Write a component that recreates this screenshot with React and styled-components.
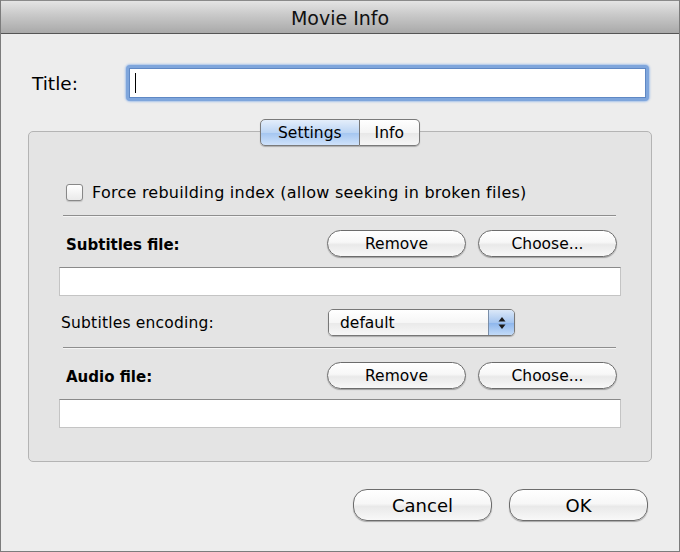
import React from 'react'
import styled, { createGlobalStyle } from 'styled-components'

const Global = createGlobalStyle`
  html, body { margin: 0; padding: 0; background: #ededed; }
  body { font-family: "DejaVu Sans", "Liberation Sans", sans-serif; color: #000; }
  * { box-sizing: border-box; }
`

const Window = styled.div`
  width: 680px;
  height: 552px;
  display: flex;
  flex-direction: column;
  background: #ededed;
  border: 1px solid #7c7c7c;
  border-top: none;
`

const TitleBar = styled.div`
  height: 34px;
  display: flex;
  align-items: center;
  justify-content: center;
  background: linear-gradient(#e4e4e4, #c8c8c8 45%, #a9a9a9);
  border-top: 1px solid #8a8a8a;
  border-bottom: 1px solid #555;
  font-size: 19px;
  color: #111;
  padding-top: 2px;
`

const Body = styled.div`
  flex: 1;
  display: flex;
  flex-direction: column;
  padding: 31px 27px 0 27px;
`

const TitleRow = styled.div`
  display: flex;
  align-items: center;
  height: 36px;
  padding: 0 3px 0 4px;
`

const BigLabel = styled.label`
  font-size: 18.5px;
  width: 94px;
`

const FocusInput = styled.div`
  flex: 1;
  height: 36px;
  border-radius: 4px;
  padding: 3px;
  background: #7fa6dc;
  box-shadow: 0 0 2px 1px #a9c4ea;
`

const FocusInner = styled.div`
  height: 100%;
  background: #fff;
  border: 1px solid #5f88c4;
  display: flex;
  align-items: center;
  padding-left: 5px;
`

const Caret = styled.span`
  width: 1px;
  height: 20px;
  background: #000;
`

const Tabs = styled.div`
  display: flex;
  justify-content: center;
  margin-top: 18px;
  position: relative;
  z-index: 1;
`

const Tab = styled.div`
  height: 27px;
  padding: 0 ${p => p.$pad}px;
  display: flex;
  align-items: center;
  font-size: 15.5px;
  border: 1px solid #7a7a7a;
  border-left-width: ${p => (p.$first ? 1 : 0)}px;
  border-radius: ${p => (p.$first ? '5px 0 0 5px' : '0 5px 5px 0')};
  background: ${p =>
    p.$active
      ? 'linear-gradient(#e4eefb, #bcd5f4 50%, #a3c5f0 51%, #cfe2fa)'
      : 'linear-gradient(#ffffff, #f4f4f4 50%, #e7e7e7 51%, #f6f6f6)'};
  box-shadow: 0 1px 1px rgba(0, 0, 0, 0.25);
`

const GroupBox = styled.div`
  margin-top: -15px;
  height: 331px;
  background: #e4e4e4;
  border: 1px solid #b4b4b4;
  border-radius: 5px;
  padding: 49px 30px 0 30px;
  display: flex;
  flex-direction: column;
`

const CheckRow = styled.div`
  display: flex;
  align-items: center;
  gap: 9px;
  padding-left: 7px;
  height: 22px;
  font-size: 16px;
  letter-spacing: 0.25px;
`

const Checkbox = styled.span`
  width: 17px;
  height: 17px;
  border: 1px solid #888;
  border-radius: 3px;
  background: linear-gradient(#ffffff, #eaeaea);
  box-shadow: 0 1px 1px rgba(0, 0, 0, 0.15);
`

const Separator = styled.hr`
  margin: ${p => p.$top}px 5px 0 4px;
  border: none;
  border-top: 1px solid #8e8e8e;
  border-bottom: 1px solid #f4f4f4;
  height: 0;
`

const FileRow = styled.div`
  display: flex;
  align-items: center;
  margin-top: ${p => p.$top}px;
  padding-left: ${p => p.$indent}px;
  padding-right: 4px;
`

const BoldLabel = styled.span`
  flex: 1;
  font-size: 15px;
  font-weight: bold;
  padding-top: 2px;
`

const PlainLabel = styled.span`
  width: 267px;
  font-size: 15.5px;
  letter-spacing: 0.2px;
`

const PillButton = styled.button`
  width: ${p => p.$w}px;
  height: ${p => p.$h}px;
  margin-left: ${p => p.$gap}px;
  border-radius: 14px;
  border: 1px solid #6c6c6c;
  background: linear-gradient(#ffffff, #f7f7f7 45%, #e9e9e9 55%, #f8f8f8);
  box-shadow: 0 1px 1px rgba(0, 0, 0, 0.3);
  font-family: inherit;
  font-size: ${p => p.$fs}px;
  color: #000;
  padding: 0;
`

const TextField = styled.div`
  height: 29px;
  margin-top: ${p => p.$top}px;
  background: #fff;
  border: 1px solid #c4c4c4;
  border-top-color: #8a8a8a;
`

const Popup = styled.div`
  width: 187px;
  height: 27px;
  display: flex;
  border: 1px solid #777;
  border-radius: 5px;
  overflow: hidden;
  box-shadow: 0 1px 1px rgba(0, 0, 0, 0.25);
  font-size: 15.5px;
`

const PopupValue = styled.div`
  flex: 1;
  display: flex;
  align-items: center;
  padding-left: 11px;
  background: linear-gradient(#ffffff, #f6f6f6 50%, #e9e9e9 51%, #f7f7f7);
`

const PopupArrows = styled.div`
  width: 26px;
  border-left: 1px solid #7a8ea8;
  display: flex;
  align-items: center;
  justify-content: center;
  background: linear-gradient(#dbe8f8, #a6c6f0 50%, #8cb5ec 51%, #c3dbf8);
`

const Footer = styled.div`
  display: flex;
  justify-content: flex-end;
  gap: 17px;
  margin-top: 27px;
  padding-right: 4px;
`

const Row = ({ label, top }) => (
  <FileRow $top={top} $indent={7}>
    <BoldLabel>{label}</BoldLabel>
    <PillButton $w={139} $h={27} $gap={0} $fs={15.5}>Remove</PillButton>
    <PillButton $w={139} $h={27} $gap={12} $fs={15.5}>Choose...</PillButton>
  </FileRow>
)

export default function App() {
  return (
    <>
      <Global />
      <Window>
        <TitleBar>Movie Info</TitleBar>
        <Body>
          <TitleRow>
            <BigLabel>Title:</BigLabel>
            <FocusInput>
              <FocusInner>
                <Caret />
              </FocusInner>
            </FocusInput>
          </TitleRow>

          <Tabs>
            <Tab $first $active $pad={17}>Settings</Tab>
            <Tab $pad={15}>Info</Tab>
          </Tabs>
          <GroupBox>
            <CheckRow>
              <Checkbox />
              Force rebuilding index (allow seeking in broken files)
            </CheckRow>
            <Separator $top={12} />
            <Row label="Subtitles file:" top={13} />
            <TextField $top={10} />
            <FileRow $top={13} $indent={2}>
              <PlainLabel>Subtitles encoding:</PlainLabel>
              <Popup>
                <PopupValue>default</PopupValue>
                <PopupArrows>
                  <svg width="8" height="14" viewBox="0 0 8 14">
                    <path d="M4 1 L7.5 5.5 H0.5 Z" fill="#1a1a1a" />
                    <path d="M4 13 L7.5 8.5 H0.5 Z" fill="#1a1a1a" />
                  </svg>
                </PopupArrows>
              </Popup>
            </FileRow>
            <Separator $top={11} />
            <Row label="Audio file:" top={13} />
            <TextField $top={10} />
          </GroupBox>

          <Footer>
            <PillButton $w={139} $h={32} $gap={0} $fs={18}>Cancel</PillButton>
            <PillButton $w={139} $h={32} $gap={0} $fs={18}>OK</PillButton>
          </Footer>
        </Body>
      </Window>
    </>
  )
}
